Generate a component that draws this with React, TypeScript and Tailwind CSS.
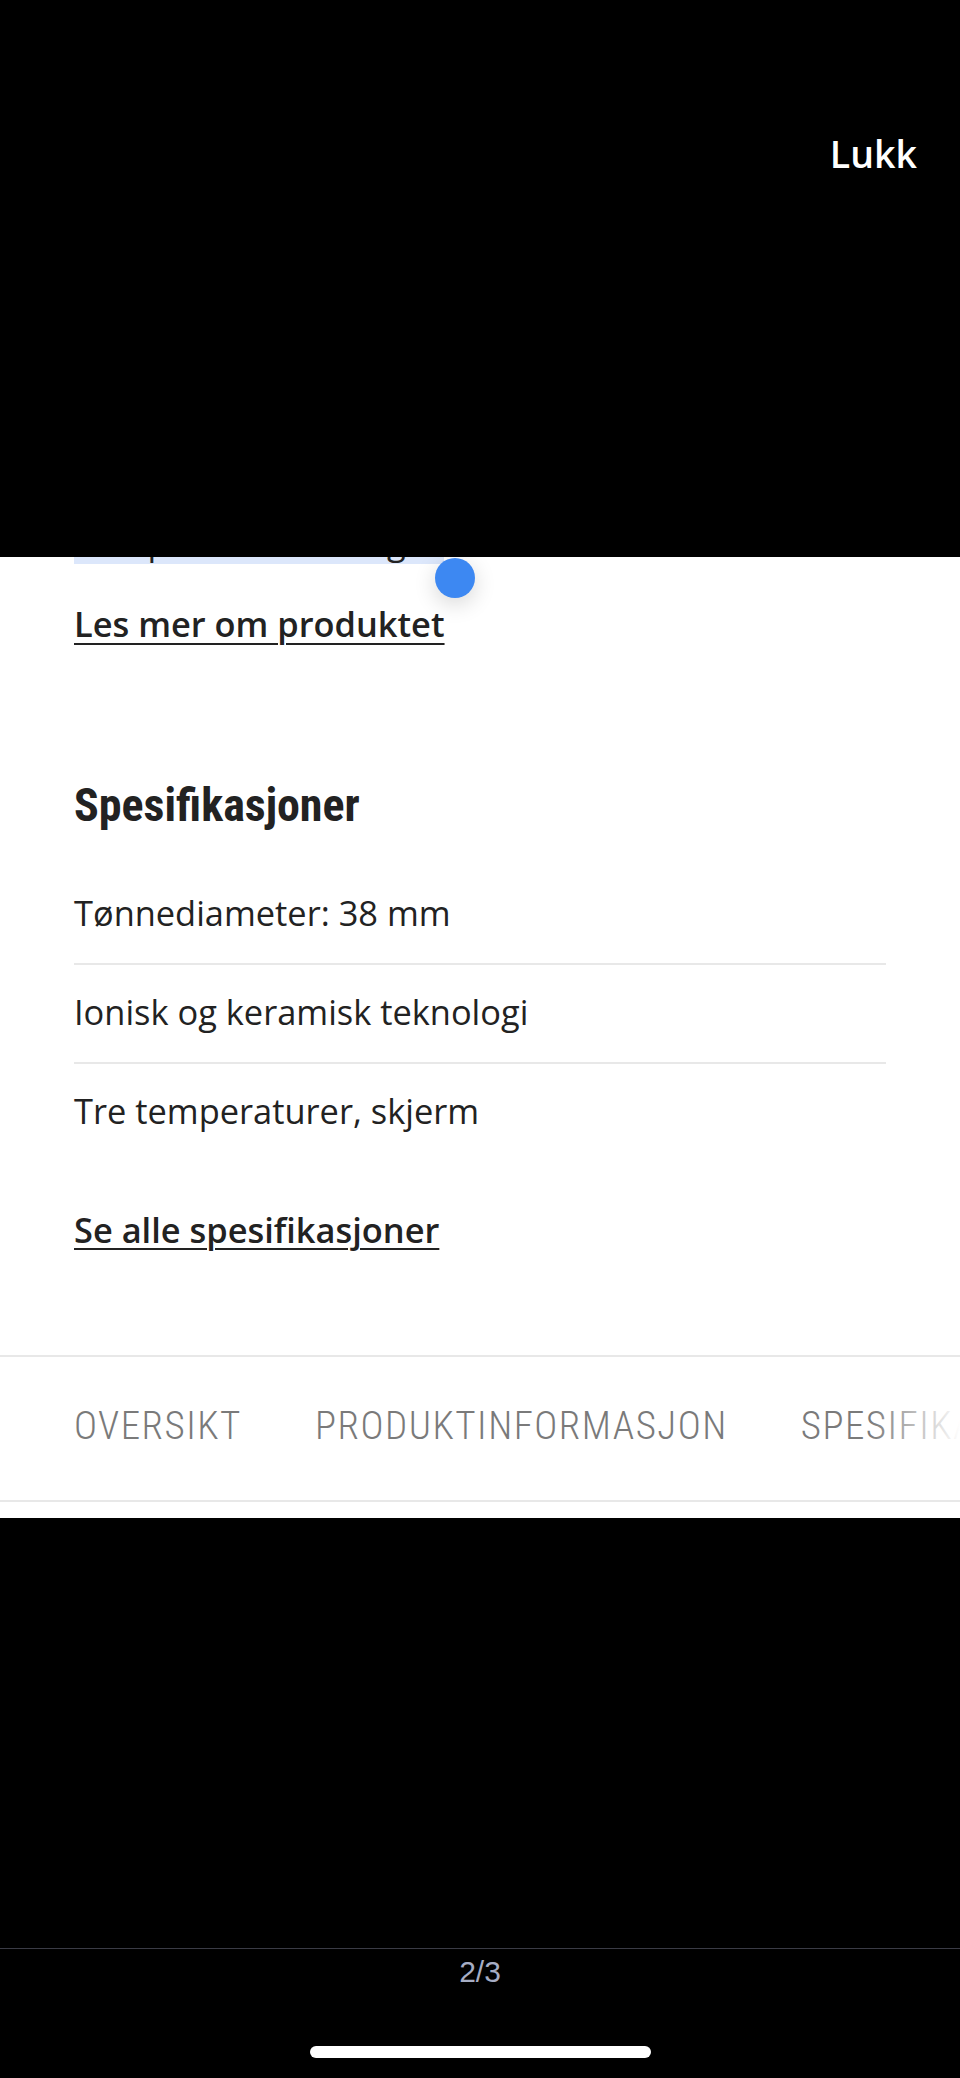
import React from 'react';

const specs = ['Tønnediameter: 38 mm', 'Ionisk og keramisk teknologi', 'Tre temperaturer, skjerm'];
const tabs = ['OVERSIKT', 'PRODUKTINFORMASJON', 'SPESIFIKASJONER'];

export default function App() {
  return (
    <div className="w-[960px] h-[2078px] bg-black overflow-hidden font-['Open_Sans',sans-serif]">
      {/* Top overlay */}
      <div className="h-[557px] bg-black flex justify-end items-start pt-[132px] pr-[43px]">
        <span className="text-white text-[37.5px] leading-[44px] font-semibold">Lukk</span>
      </div>

      {/* Page content */}
      <div className="relative bg-white overflow-hidden">
        <div className="px-[74px]">
          {/* cut-off selected line */}
          <div className="h-[7px] overflow-hidden flex items-end">
            <span className="text-[34.4px] leading-[44px] text-[#222] bg-[#dce7fb] whitespace-nowrap">
              Kompakt til reiser og til
            </span>
          </div>

          <a className="block mt-[38px] text-[34.4px] leading-[44px] font-semibold text-[#222] underline decoration-2 underline-offset-[6px]">
            Les mer om produktet
          </a>

          <h2 className="mt-[131px] text-[46px] leading-[56px] font-bold text-[#222] font-['Liberation_Sans_Narrow','Roboto_Condensed',Roboto,sans-serif]">
            Spesifikasjoner
          </h2>

          <div className="mt-[33px]">
            {specs.map((s, i) => (
              <div
                key={s}
                className={
                  i < specs.length - 1
                    ? 'pt-[25px] pb-[28px] border-b-2 border-[#e8e8e8]'
                    : 'pt-[25px] pb-[28px]'
                }
              >
                <p className="text-[34.4px] leading-[44px] text-[#222]">{s}</p>
              </div>
            ))}
          </div>

          <a className="block mt-[47px] text-[34.4px] leading-[44px] font-semibold text-[#222] underline decoration-2 underline-offset-[5px]">
            Se alle spesifikasjoner
          </a>
        </div>

        {/* Tab bar */}
        <div className="mt-[103px] border-t-2 border-b-2 border-[#e8e8e8] relative overflow-hidden">
          <div className="flex gap-[73px] pl-[74px] pt-[45px] pb-[50px] whitespace-nowrap">
            {tabs.map((t) => (
              <span
                key={t}
                className="text-[39px] leading-[48px] tracking-[1.5px] font-light text-[#7a7a7a] font-['Liberation_Sans_Narrow','Roboto_Condensed',Roboto,sans-serif]"
              >
                {t}
              </span>
            ))}
          </div>
          <div className="absolute right-0 top-0 bottom-0 w-[90px] bg-gradient-to-r from-white/0 to-white" />
        </div>
        <div className="h-[16px]" />

        {/* selection handle */}
        <div className="absolute left-[435px] top-[1px] w-[40px] h-[40px] rounded-full bg-[#3d88f2] shadow-[0_6px_22px_rgba(0,0,0,0.16)]" />
      </div>

      {/* Bottom overlay */}
      <div className="h-[430px] bg-black" />
      <div className="border-t border-[#3a3b45] flex flex-col items-center pt-[5px]">
        <span className="text-[30px] leading-[36px] text-[#a6adc4] font-['Liberation_Sans',sans-serif]">2/3</span>
        <div className="mt-[56px] w-[341px] h-[12px] rounded-full bg-white" />
      </div>
    </div>
  );
}
